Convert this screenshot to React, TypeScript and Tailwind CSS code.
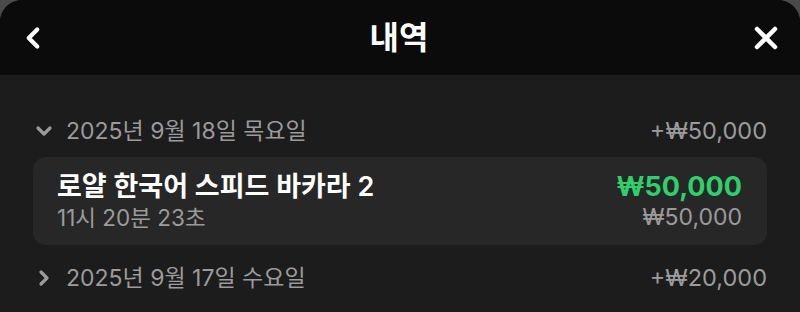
import { ChevronDown, ChevronLeft, ChevronRight, X } from "lucide-react";

const FONT = { fontFamily: '"Inter", "Noto Sans CJK KR", sans-serif' };

export default function App() {
  return (
    <div className="h-[312px] w-[800px] overflow-hidden bg-[#4a4a4a]" style={FONT}>
      <div className="h-full overflow-hidden rounded-t-[22px] bg-[#1c1c1c]">
        {/* header */}
        <div className="flex h-[75px] items-center justify-between bg-[#0b0b0b] px-[16px]">
          <ChevronLeft className="h-[34px] w-[34px] text-white" strokeWidth={3} />
          <h1 className="text-[32px] font-semibold leading-none text-white">내역</h1>
          <X className="h-[36px] w-[36px] text-white" strokeWidth={3} />
        </div>

        <div className="px-[32px] pt-[40px]">
          {/* day 1 */}
          <div className="flex h-[32px] items-center justify-between pr-[1px] text-[#9b9b9b]">
            <div className="flex items-center gap-[10px]">
              <ChevronDown className="h-[24px] w-[24px]" strokeWidth={3.2} />
              <span className="text-[23px]">2025년 9월 18일 목요일</span>
            </div>
            <span className="text-[23.5px]">+₩50,000</span>
          </div>

          <div className="mx-[1px] mt-[10px] flex h-[88px] items-center justify-between rounded-[13px] bg-[#272727] pl-[24px] pr-[25px]">
            <div className="flex flex-col">
              <span className="text-[27px] font-semibold leading-[32px] text-white">로얄 한국어 스피드 바카라 2</span>
              <span className="text-[22.5px] leading-[29px] text-[#9b9b9b]">11시 20분 23초</span>
            </div>
            <div className="flex flex-col items-end">
              <span className="text-[27px] font-bold leading-[32px] text-[#2fcf6c]">₩50,000</span>
              <span className="text-[23px] leading-[29px] text-[#9b9b9b]">₩50,000</span>
            </div>
          </div>

          {/* day 2 */}
          <div className="mt-[17px] flex h-[32px] items-center justify-between pr-[1px] text-[#9b9b9b]">
            <div className="flex items-center gap-[10px]">
              <ChevronRight className="h-[24px] w-[24px]" strokeWidth={3.2} />
              <span className="text-[23px]">2025년 9월 17일 수요일</span>
            </div>
            <span className="text-[23.5px]">+₩20,000</span>
          </div>
        </div>
      </div>
    </div>
  );
}
